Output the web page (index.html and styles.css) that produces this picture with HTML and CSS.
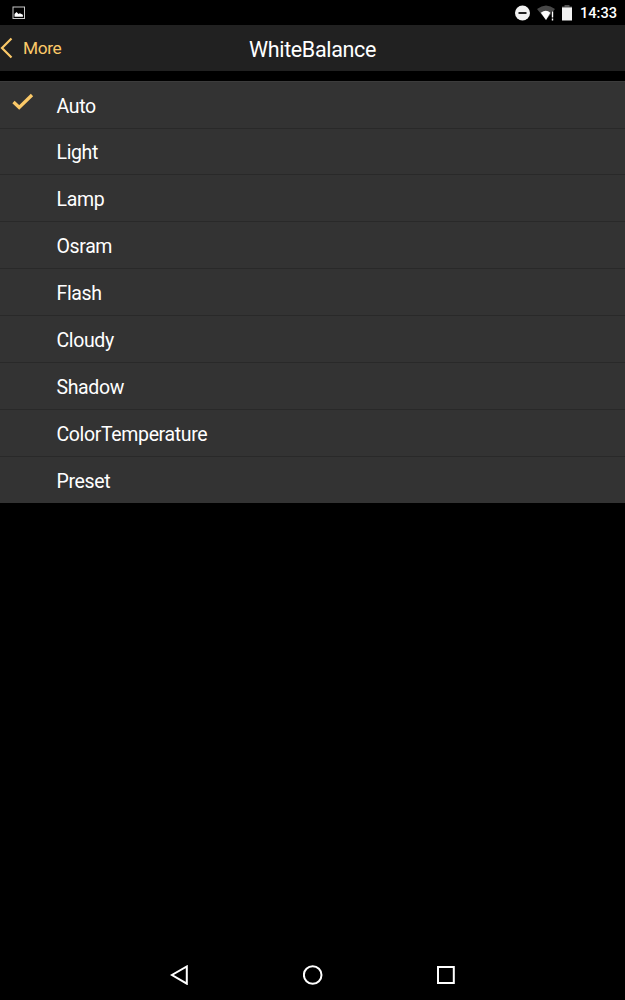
FILE: index.html
```html
<!DOCTYPE html>
<html lang="en">
<head>
  <meta charset="UTF-8" />
  <meta name="viewport" content="width=device-width, initial-scale=1.0"/>
  <title>WhiteBalance</title>
  <link rel="stylesheet" href="styles.css">
</head>
<body>
  <div class="statusbar">
    <svg class="picture" width="14" height="14" viewBox="0 0 14 14">
      <rect x="1" y="1" width="11.5" height="11.5" fill="none" stroke="#c8c8c8" stroke-width="1"/>
      <path d="M2.5 10.8V8l2-2 2 2 1.4-.8 3 1.600v2z" fill="#fff"/>
    </svg>
    <div class="status-icons">
      <svg width="16" height="16" viewBox="0 0 16 16">
        <circle cx="7.5" cy="8" r="7.5" fill="#f2f2f2"/>
        <rect x="3.5" y="7" width="8" height="2" fill="#222"/>
      </svg>
      <svg class="wifi" width="19" height="16" viewBox="0 0 19 16">
        <path d="M0 4Q9 -3 18 4L16 6.4H14V9L9 15z" fill="#484848"/>
        <path d="M3.8 7.800Q9 3.800 13.400 7.800L9 15z" fill="#fff"/>
        <path d="M15.5 6.500v6M15.5 13.500v2" stroke="#fff" stroke-width="1.4"/>
      </svg>
      <svg class="battery" width="12" height="16" viewBox="0 0 12 16">
        <path d="M3.5 0h5v1.5H11V3H1V1.500h2.500z" fill="#555"/>
        <rect x="1" y="2.5" width="10" height="13" fill="#f2f2f2"/>
      </svg>
      <span class="clock">14:33</span>
    </div>
  </div>

  <div class="header">
    <div class="back">
      <svg width="13" height="22" viewBox="0 0 13 22">
        <path d="M11.5 1.500L2 11l9.500 9.500" fill="none" stroke="#fbc968" stroke-width="2.2"/>
      </svg>
      <span>More</span>
    </div>
    <h1>WhiteBalance</h1>
  </div>

  <ul class="list">
    <li>
      <svg class="check" width="22" height="18" viewBox="0 0 22 18">
        <path d="M1.5 9L7.200 14.500L20 2" fill="none" stroke="#fbc968" stroke-width="3.3"/>
      </svg>
      Auto
    </li>
    <li>Light</li>
    <li>Lamp</li>
    <li>Osram</li>
    <li>Flash</li>
    <li>Cloudy</li>
    <li>Shadow</li>
    <li>ColorTemperature</li>
    <li>Preset</li>
  </ul>

  <div class="navbar">
    <svg width="20" height="20" viewBox="0 0 20 20">
      <path d="M16.8 1.500v17.200L2 10z"/>
    </svg>
    <svg width="20" height="20" viewBox="0 0 20 20">
      <circle cx="9.7" cy="10" r="8.8"/>
    </svg>
    <svg width="20" height="20" viewBox="0 0 20 20">
      <rect x="2" y="2" width="15.8" height="16"/>
    </svg>
  </div>
</body>
</html>
```
FILE: styles.css
```css
body {
  margin: 0;
  height: 1000px;
  display: flex;
  flex-direction: column;
  overflow: hidden;
  font-family: Roboto, sans-serif;
  background-color: #000;
  color: #fff;
}
svg {
  display: block;
  flex: none;
}
.statusbar {
  display: flex;
  align-items: center;
  justify-content: space-between;
  height: 25px;
  padding: 0 8px 0 12px;
}
.status-icons {
  display: flex;
  align-items: center;
}
.wifi {
  margin-left: 6px;
}
.battery {
  margin-left: 5px;
}
.clock {
  margin-left: 7px;
  font-size: 14.6px;
  font-weight: 500;
  line-height: 25px;
  padding-top: 1px;
}
.header {
  display: grid;
  grid-template-columns: 1fr auto 1fr;
  align-items: center;
  height: 46px;
  background-color: #212121;
}
.back {
  display: flex;
  align-items: center;
  gap: 10px;
  color: #fbc968;
  font-size: 17.3px;
  letter-spacing: -0.4px;
}
h1 {
  margin: 0;
  font-size: 21.5px;
  font-weight: 400;
  letter-spacing: -0.35px;
  padding-top: 2px;
}
.list {
  margin: 10px 0 0;
  padding: 0;
  list-style: none;
  background-color: #333;
}
.list li {
  display: flex;
  align-items: center;
  box-sizing: border-box;
  height: 46.875px;
  padding: 3px 0 0 56.5px;
  border-bottom: 1px solid #292929;
  font-size: 19.5px;
  letter-spacing: -0.36px;
}
.list li:first-child {
  height: 47.5px;
  border-top: 1px solid #3c3c3c;
}
.list li:last-child {
  height: 46.5px;
  border-bottom: none;
}
.check {
  margin: -8px 22.5px 0 -44.5px;
}
.navbar {
  display: flex;
  justify-content: center;
  align-items: center;
  gap: 113px;
  height: 50px;
  margin-top: auto;
}
.navbar svg {
  fill: none;
  stroke: #fff;
  stroke-width: 2;
}
```
